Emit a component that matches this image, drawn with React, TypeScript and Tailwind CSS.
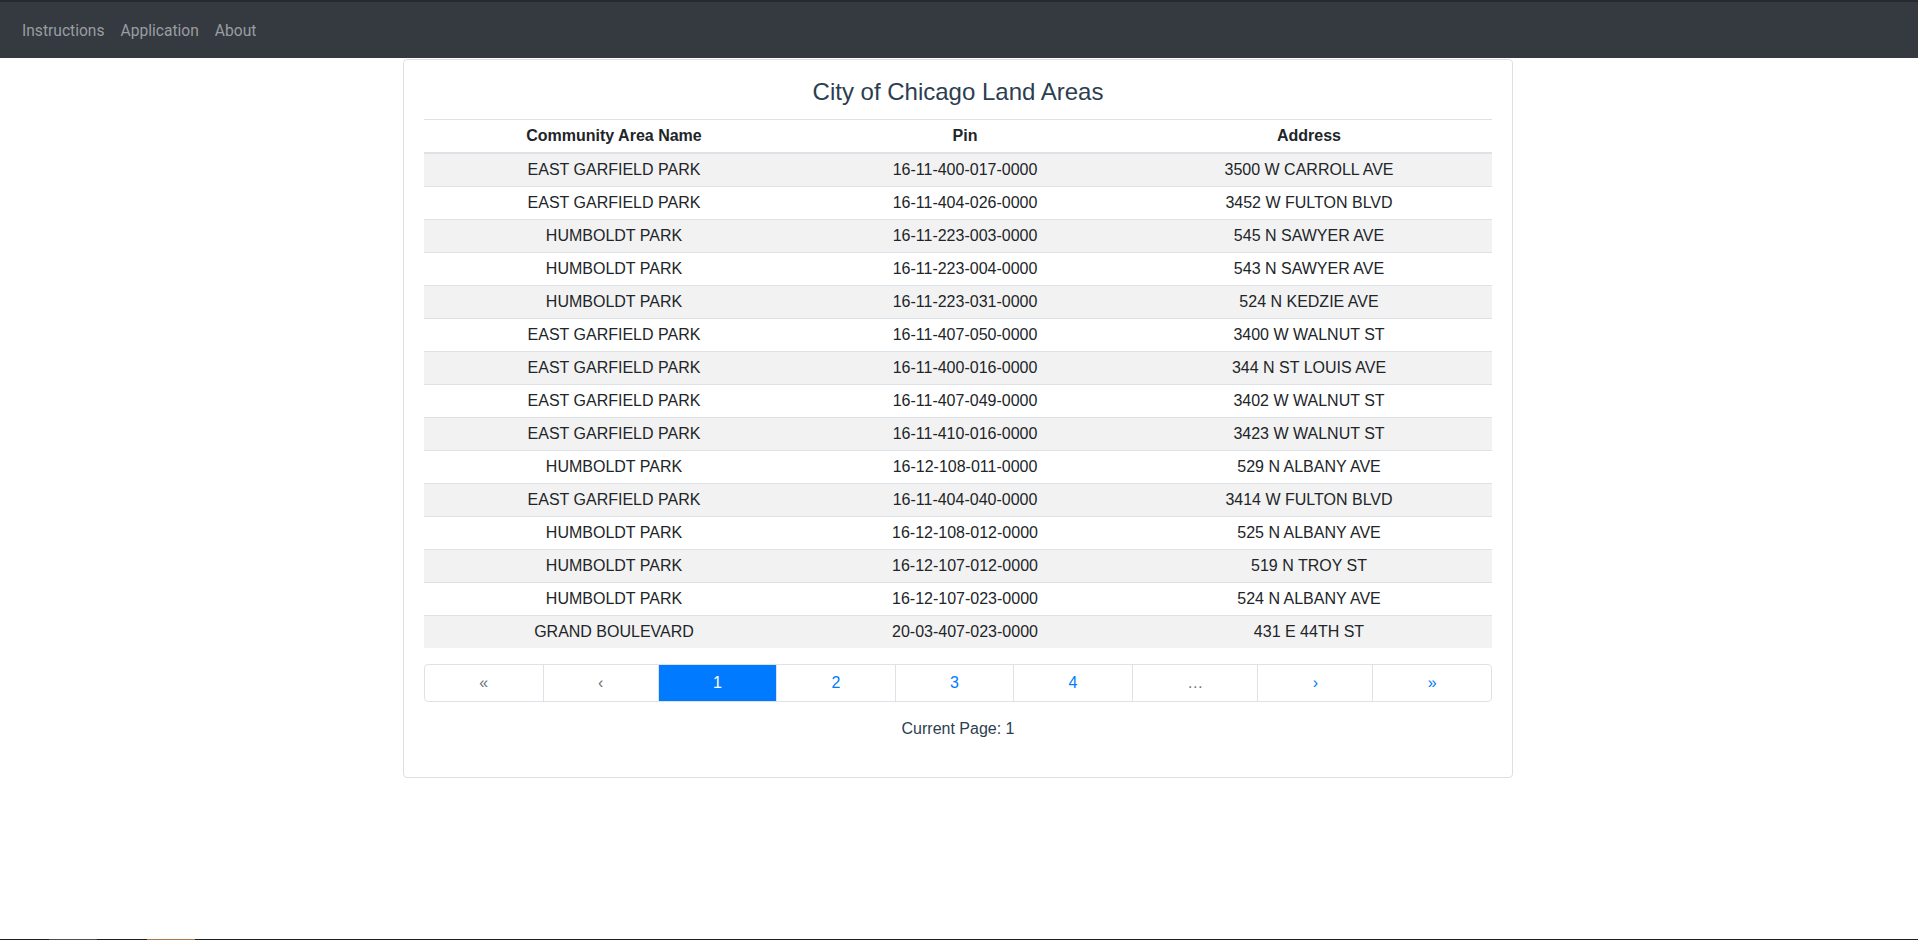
import React from "react";

const rows: [string, string, string][] = [
  ["EAST GARFIELD PARK", "16-11-400-017-0000", "3500 W CARROLL AVE"],
  ["EAST GARFIELD PARK", "16-11-404-026-0000", "3452 W FULTON BLVD"],
  ["HUMBOLDT PARK", "16-11-223-003-0000", "545 N SAWYER AVE"],
  ["HUMBOLDT PARK", "16-11-223-004-0000", "543 N SAWYER AVE"],
  ["HUMBOLDT PARK", "16-11-223-031-0000", "524 N KEDZIE AVE"],
  ["EAST GARFIELD PARK", "16-11-407-050-0000", "3400 W WALNUT ST"],
  ["EAST GARFIELD PARK", "16-11-400-016-0000", "344 N ST LOUIS AVE"],
  ["EAST GARFIELD PARK", "16-11-407-049-0000", "3402 W WALNUT ST"],
  ["EAST GARFIELD PARK", "16-11-410-016-0000", "3423 W WALNUT ST"],
  ["HUMBOLDT PARK", "16-12-108-011-0000", "529 N ALBANY AVE"],
  ["EAST GARFIELD PARK", "16-11-404-040-0000", "3414 W FULTON BLVD"],
  ["HUMBOLDT PARK", "16-12-108-012-0000", "525 N ALBANY AVE"],
  ["HUMBOLDT PARK", "16-12-107-012-0000", "519 N TROY ST"],
  ["HUMBOLDT PARK", "16-12-107-023-0000", "524 N ALBANY AVE"],
  ["GRAND BOULEVARD", "20-03-407-023-0000", "431 E 44TH ST"],
];

const pages: { label: string; kind: "muted" | "active" | "link" }[] = [
  { label: "«", kind: "muted" },
  { label: "‹", kind: "muted" },
  { label: "1", kind: "active" },
  { label: "2", kind: "link" },
  { label: "3", kind: "link" },
  { label: "4", kind: "link" },
  { label: "…", kind: "muted" },
  { label: "›", kind: "link" },
  { label: "»", kind: "link" },
];

export default function App() {
  return (
    <div className="min-h-[940px] flex flex-col bg-white font-['Liberation_Sans',Arial,sans-serif] text-[#212529]">
      <nav className="h-[58px] shrink-0 bg-[#343a40] border-t-2 border-[#26292d] flex items-center pt-[3px] px-[22px] gap-4 font-['Roboto','Noto_Sans',sans-serif] text-[15.6px] text-[#9a9da1]">
        <span>Instructions</span>
        <span>Application</span>
        <span>About</span>
      </nav>

      <div className="ml-[403px] mt-px w-[1110px] border border-[#dfdfdf] rounded-[4px] px-[20px] pb-[36px]">
        <h3 className="pt-[18px] mb-[13px] h-[46px] leading-[28px] text-[24px] text-center text-[#2c3e50] font-normal">
          City of Chicago Land Areas
        </h3>

        <div className="w-[1068px]">
          <div className="grid grid-cols-[380px_322px_366px] h-[35px] border-t border-b-2 border-[#dee2e6] items-center text-center font-bold text-[16px]">
            <div>Community Area Name</div>
            <div>Pin</div>
            <div>Address</div>
          </div>
          {rows.map((r, i) => (
            <div
              key={i}
              className={`grid grid-cols-[380px_322px_366px] items-center text-center text-[16px] ${
                i === 0 ? "h-[32px]" : "h-[33px] border-t border-[#dee2e6]"
              } ${i % 2 === 0 ? "bg-[#f2f2f2]" : "bg-white"}`}
            >
              <div>{r[0]}</div>
              <div>{r[1]}</div>
              <div>{r[2]}</div>
            </div>
          ))}
        </div>

        <div className="mt-4 flex h-[38px] border border-[#dee2e6] rounded-[4px] overflow-hidden text-[16px]">
          {pages.map((p, i) => (
            <div
              key={i}
              className={`flex-auto flex items-center justify-center leading-[36px] ${
                i > 0 ? "border-l border-[#dee2e6]" : ""
              } ${
                p.kind === "active"
                  ? "bg-[#007bff] text-white border-[#007bff]"
                  : p.kind === "link"
                  ? "text-[#007bff]"
                  : "text-[#6c757d]"
              }`}
            >
              {p.label}
            </div>
          ))}
        </div>

        <div className="mt-[15px] h-[24px] leading-[24px] text-center text-[16px] text-[#2c3e50]">
          Current Page: 1
        </div>
      </div>

      <div className="flex-1" />
      <div className="h-px flex shrink-0 bg-[#1e1e1e]">
        <div className="w-[49px]" />
        <div className="w-[48px] bg-[#4e4e4e]" />
        <div className="w-[50px]" />
        <div className="w-[48px] bg-[#ad7744]" />
      </div>
    </div>
  );
}
